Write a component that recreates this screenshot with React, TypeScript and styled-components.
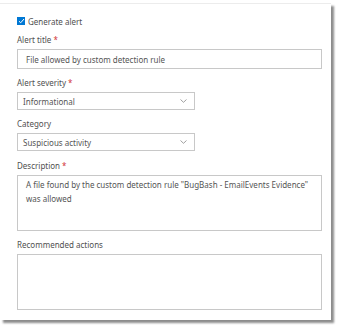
import styled, { createGlobalStyle } from "styled-components";

const GlobalStyle = createGlobalStyle`
  html, body {
    margin: 0;
    padding: 0;
    background: #ffffff;
  }
  body {
    width: 341px;
    height: 329px;
    overflow: hidden;
    font-family: "Segoe UI", "Noto Sans", "Open Sans", sans-serif;
  }
`;

const Page = styled.div`
  padding-top: 3px;
`;

const Card = styled.div`
  width: 331px;
  height: 317px;
  box-sizing: border-box;
  background: #fff;
  border-top: 1px solid #ececec;
  box-shadow: 3px 3px 2px rgba(0, 0, 0, 0.45);
  padding: 12px 0 0 17px;
  display: flex;
  flex-direction: column;
`;

const CheckRow = styled.label`
  display: flex;
  align-items: center;
  gap: 3px;
  height: 10px;
  font-size: 8px;
  color: #505050;
`;

const Box = styled.span`
  width: 8px;
  height: 8px;
  background: #0078d4;
  display: flex;
  align-items: center;
  justify-content: center;
`;

const Label = styled.div<{ $gap?: number }>`
  margin-top: ${(p) => p.$gap ?? 8}px;
  margin-bottom: 3px;
  height: 12px;
  line-height: 12px;
  font-size: 8px;
  color: #505050;
`;

const Req = styled.span`
  color: #d13438;
  margin-left: 2px;
`;

const Field = styled.div<{ $w: number; $h: number }>`
  box-sizing: border-box;
  width: ${(p) => p.$w}px;
  height: ${(p) => p.$h}px;
  border: 1px solid #c8c8c8;
  font-size: 8px;
  color: #555;
  display: flex;
  align-items: center;
  padding: 0 8px;
`;

const Select = styled(Field)`
  justify-content: space-between;
  padding: 0 7px 0 5px;
`;

const Area = styled(Field)`
  align-items: flex-start;
  padding: 2px 8px;
  line-height: 14px;
`;

const Chevron = () => (
  <svg width="7" height="4" viewBox="0 0 7 4">
    <path d="M0.5 0.5 L3.5 3.3 L6.5 0.5" fill="none" stroke="#888" strokeWidth="0.8" />
  </svg>
);

export default function App() {
  return (
    <Page>
      <GlobalStyle />
      <Card>
        <CheckRow>
          <Box>
            <svg width="7" height="6" viewBox="0 0 7 6">
              <path d="M1 3.2 L2.7 4.8 L6 1" fill="none" stroke="#fff" strokeWidth="1" />
            </svg>
          </Box>
          Generate alert
        </CheckRow>
        <Label>
          Alert title<Req>*</Req>
        </Label>
        <Field $w={305} $h={20}>File allowed by custom detection rule</Field>
        <Label>
          Alert severity<Req>*</Req>
        </Label>
        <Select $w={178} $h={18}>
          Informational
          <Chevron />
        </Select>
        <Label>Category</Label>
        <Select $w={178} $h={18}>
          Suspicious activity
          <Chevron />
        </Select>
        <Label $gap={9}>
          Description<Req>*</Req>
        </Label>
        <Area $w={305} $h={56}>
          A file found by the custom detection rule "BugBash - EmailEvents Evidence" was allowed
        </Area>
        <Label>Recommended actions</Label>
        <Area $w={305} $h={56} />
      </Card>
    </Page>
  );
}
